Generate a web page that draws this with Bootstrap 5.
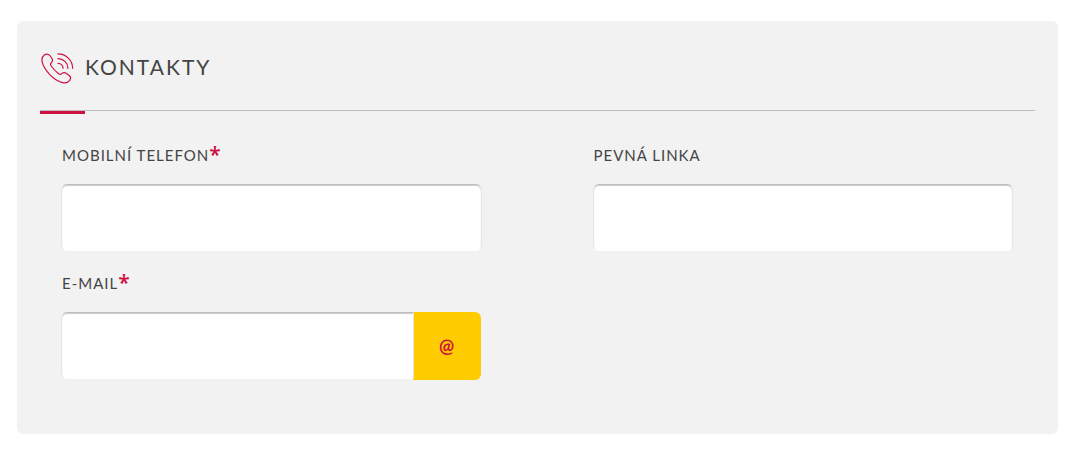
<!DOCTYPE html>
<html lang="cs">
<head>
<meta charset="utf-8">
<meta name="viewport" content="width=device-width, initial-scale=1">
<title>Kontakty</title>
<link href="https://cdn.jsdelivr.net/npm/bootstrap@5.3.0/dist/css/bootstrap.min.css" rel="stylesheet">
<style>
  body { font-family: Lato, "Open Sans", sans-serif; color: #444; background: #fff; }
  .page-wrap { padding: 21px 13px 19px 17px; }
  .panel { background: #f2f2f2; border-radius: 6px; padding: 28px 23px 55px; }
  .panel-head { border-bottom: 1px solid #bdbdbd; height: 62px; position: relative; margin-bottom: 32px; }
  .panel-head::after { content: ""; position: absolute; left: 0; bottom: -4px; width: 45px; height: 3px; background: #ce1141; }
  .panel-title { font-size: 21px; line-height: 36px; letter-spacing: 2px; font-weight: 400; margin-left: 11px; }
  .panel-fields { padding: 0 22px 0 21px; }
  .fields-row { --bs-gutter-x: 111px; row-gap: 20px; }
  .field-label { font-size: 15px; line-height: 24px; height: 24px; letter-spacing: 1px; margin-bottom: 17px; padding-left: 1px; }
  .star { color: #ce1141; font-size: 21px; line-height: 22px; letter-spacing: 0; font-family: "Open Sans", sans-serif; font-weight: 600; }
  .field-box, .field-box:focus { height: 67px; border: 1px solid #e6e6e6; border-top-color: #bdbdbd; border-bottom-color: #fff; border-radius: 6px; background: #fff; box-shadow: inset 0 1px 1px #ccc; }
  .email-group { padding-right: 1px; }
  .at-sign { width: 68px; height: 68px; margin-bottom: -1px; justify-content: center; border: 0; border-radius: 6px; background: #fc0; color: #ce1141; font-size: 18px; font-weight: 700; }
</style>
</head>
<body>
<main class="page-wrap">
  <section class="panel">
    <header class="panel-head d-flex align-items-start">
      <svg class="mt-1 flex-shrink-0" width="34" height="32" viewBox="0 0 34 32" fill="none" stroke="#ce1141" stroke-width="1.2" stroke-linecap="round" aria-hidden="true">
        <path d="M4.300 2.100C6.300.6 8.300.9 9.900 2.600l1.800 2.400c1.200 1.700 1 3.300-.2 4.500-1.300 1.200-1.200 2.200-.3 3.500 2 2.900 4.500 5.500 7.500 7.800 1.200.8 2.100.7 3.100-.2 1.400-1.300 3-1.300 4.600-.2l2.500 1.800c1.900 1.500 2.200 3.400.8 5.200-1.700 2.200-4.300 3-7.200 2.200-4.700-1.200-8.800-4-12.500-7.800-3.900-4-7-8.700-7.900-13.100C1.600 6.200 2.300 3.600 4.300 2.100Z"/>
        <path d="M18 .9c8 0 14.600 6.400 14.600 14.400M18 5.600c5.500 0 9.900 4.300 9.900 9.700M18 10.300c2.800 0 5 2.200 5 5"/>
      </svg>
      <h2 class="panel-title mb-0">KONTAKTY</h2>
    </header>
    <form class="panel-fields">
      <div class="row fields-row">
        <div class="col-6">
          <label class="field-label d-flex" for="mobile">MOBILNÍ TELEFON<span class="star">*</span></label>
          <input class="form-control field-box" type="tel" id="mobile" required>
        </div>
        <div class="col-6">
          <label class="field-label d-flex" for="landline">PEVNÁ LINKA</label>
          <input class="form-control field-box" type="tel" id="landline">
        </div>
        <div class="col-6">
          <label class="field-label d-flex" for="email">E-MAIL<span class="star">*</span></label>
          <div class="input-group email-group align-items-start">
            <input class="form-control field-box" type="email" id="email" required>
            <span class="input-group-text at-sign">@</span>
          </div>
        </div>
      </div>
    </form>
  </section>
</main>
<script src="https://cdn.jsdelivr.net/npm/bootstrap@5.3.0/dist/js/bootstrap.bundle.min.js"></script>
</body>
</html>
